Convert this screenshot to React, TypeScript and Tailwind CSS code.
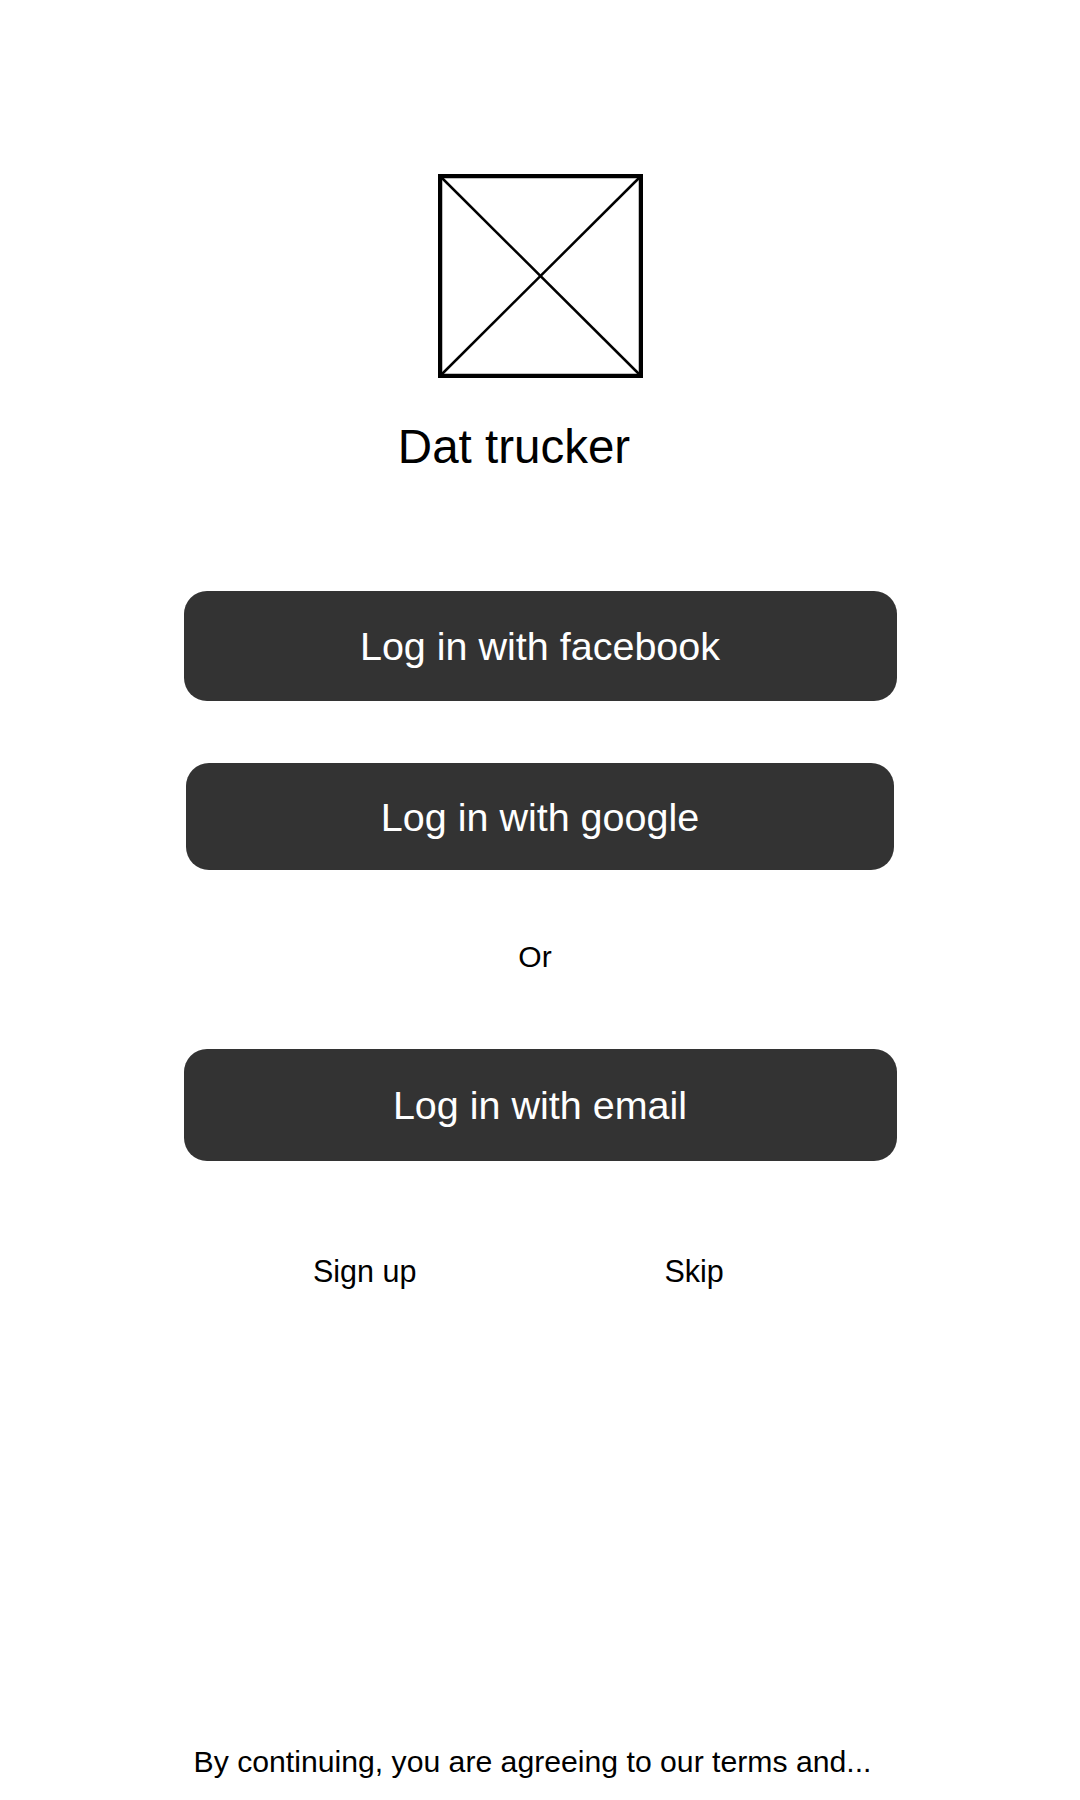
import React from "react";

function Placeholder() {
  return (
    <svg width="205" height="204" viewBox="0 0 205 204" className="block">
      <rect x="2" y="2" width="201" height="200" fill="none" stroke="#000" strokeWidth="4.5" />
      <line x1="2" y1="2" x2="203" y2="202" stroke="#000" strokeWidth="2.5" />
      <line x1="203" y1="2" x2="2" y2="202" stroke="#000" strokeWidth="2.5" />
    </svg>
  );
}

export default function App() {
  return (
    <div
      className="w-[1080px] h-[1800px] bg-white flex flex-col items-stretch text-black"
      style={{ fontFamily: '"Liberation Sans", Arial, sans-serif' }}
    >
      <div className="flex justify-center pt-[174px]">
        <Placeholder />
      </div>
      <div className="flex justify-center pr-[52px] mt-[45px] text-[47.5px] leading-[47px]">
        Dat trucker
      </div>
      <div className="flex justify-center mt-[121px]">
        <button className="w-[713px] h-[110px] rounded-[23px] bg-[#333333] text-white text-[39.5px] leading-[40px] flex items-center justify-center">
          Log in with facebook
        </button>
      </div>
      <div className="flex justify-center mt-[62px]">
        <button className="w-[708px] h-[107px] rounded-[23px] bg-[#333333] text-white text-[39.5px] leading-[40px] flex items-center justify-center">
          Log in with google
        </button>
      </div>
      <div className="flex justify-center pr-[10px] mt-[72px] text-[30px] leading-[30px]">
        Or
      </div>
      <div className="flex justify-center mt-[77px]">
        <button className="w-[713px] h-[112px] rounded-[23px] bg-[#333333] text-white text-[39.5px] leading-[40px] flex items-center justify-center">
          Log in with email
        </button>
      </div>
      <div className="flex pl-[313px] gap-[248px] mt-[95px] text-[30.5px] leading-[30px]">
        <span>Sign up</span>
        <span>Skip</span>
      </div>
      <div className="flex justify-center pr-[15px] mt-[461px] text-[30.2px] leading-[30px]">
        By continuing, you are agreeing to our terms and...
      </div>
    </div>
  );
}
